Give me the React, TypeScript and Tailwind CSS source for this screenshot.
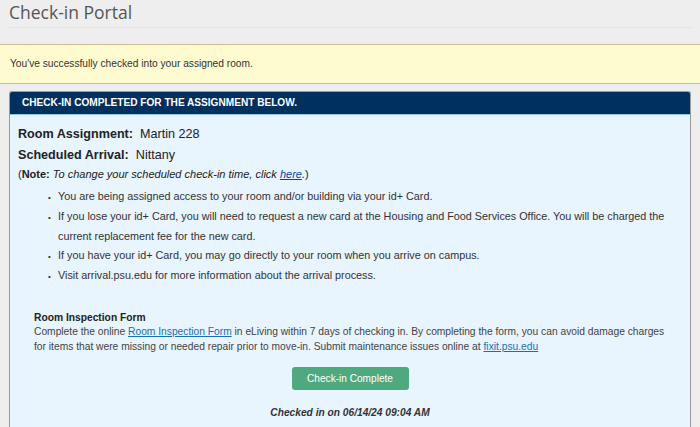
import React from 'react'

const bullets = [
  'You are being assigned access to your room and/or building via your id+ Card.',
  'If you lose your id+ Card, you will need to request a new card at the Housing and Food Services Office. You will be charged the current replacement fee for the new card.',
  'If you have your id+ Card, you may go directly to your room when you arrive on campus.',
  'Visit arrival.psu.edu for more information about the arrival process.',
]

export default function App() {
  return (
    <div className="h-[427px] overflow-hidden bg-[#eeeeee] font-['Liberation_Sans',Arial,sans-serif] text-[#333]">
      <div className="px-[9px] pt-[1px]">
        <h1 className="border-b border-[#e2e2e2] pb-[4px] font-['Open_Sans',sans-serif] text-[17.5px] leading-[22px] text-[#555]">
          Check-in Portal
        </h1>
      </div>

      <div className="mt-[16px] border-y border-[#cdbf8e] bg-[#fffbd0] px-[10px] py-[13px] text-[10.2px] leading-[12px]">
        You've successfully checked into your assigned room.
      </div>

      <div className="mx-[9px] mt-[7px] overflow-hidden rounded-t-[3px] border-x border-t border-[#999]">
        <div className="border-b border-[#8fc4e6] bg-[#00305e] px-[12px] py-[5px] text-[10.1px] font-bold leading-[12px] text-white">
          CHECK-IN COMPLETED FOR THE ASSIGNMENT BELOW.
        </div>
        <div className="bg-[#e8f4fe] pb-[10px] pl-[8px] pr-[2px] pt-[8px]">
          <p className="text-[12.6px] leading-[22px] text-[#222]">
            <span className="font-bold">Room Assignment:</span>&nbsp; Martin 228
          </p>
          <p className="text-[12.6px] leading-[21px] text-[#222]">
            <span className="font-bold">Scheduled Arrival:</span>&nbsp; Nittany
          </p>
          <p className="text-[11px] leading-[16px] text-[#222]">
            (<span className="font-bold">Note:</span>{' '}
            <em>
              To change your scheduled check-in time, click{' '}
              <a className="text-[#0645ad] underline">here</a>.
            </em>
            )
          </p>
          <ul className="-mr-[4px] ml-[30px] mt-[5px] text-[10.8px] leading-[19.75px] text-[#333]">
            {bullets.map((b) => (
              <li key={b} className="pl-[10px] -indent-[10px]">
                <span className="inline-block w-[10px] indent-0 align-baseline text-[8px] leading-none">•</span>
                {b}
              </li>
            ))}
          </ul>

          <div className="mt-[25px] pl-[16px] pr-[22px] text-[10.25px] leading-[14.5px] text-[#444]">
            <p className="font-bold text-[#222]">Room Inspection Form</p>
            <p>
              Complete the online <a className="text-[#1a6fb0] underline">Room Inspection Form</a> in eLiving within 7
              days of checking in. By completing the form, you can avoid damage charges for items that were missing or
              needed repair prior to move-in. Submit maintenance issues online at{' '}
              <a className="text-[#1a6fb0] underline">fixit.psu.edu</a>
            </p>
          </div>

          <div className="mt-[13px] flex justify-center pr-[6px]">
            <button className="h-[23px] w-[117px] rounded-[3px] bg-[#4fa97e] text-[10.1px] text-white">
              Check-in Complete
            </button>
          </div>
          <p className="mt-[17px] pr-[6px] text-center text-[10.2px] font-bold italic leading-[12px] text-[#333]">
            Checked in on 06/14/24 09:04 AM
          </p>
        </div>
      </div>
    </div>
  )
}
